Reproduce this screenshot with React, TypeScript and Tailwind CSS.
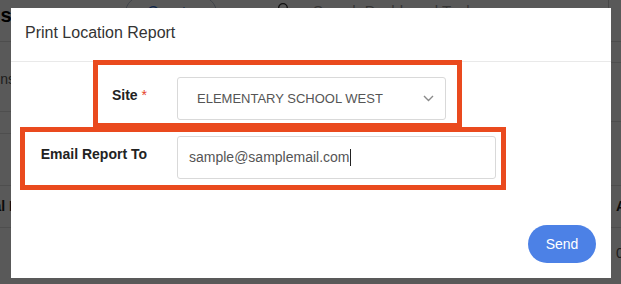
import React from "react";
import { Search } from "lucide-react";

function BackgroundPage() {
  return (
    <div className="flex flex-col">
      <div className="flex h-[42px] items-start border-b border-[#dcdcdc]">
        <div className="w-[125px] shrink-0 overflow-visible">
          <div className="-ml-[14px] mt-[3px] whitespace-nowrap text-[20px] font-bold leading-[24px] text-black">
            Assets Report
          </div>
        </div>
        <div className="-mt-[4px] flex h-[34px] w-[92px] shrink-0 items-center justify-center rounded-full border border-[#b9c3d6] text-[16px] text-[#2f6fd6]">
          Create
        </div>
        <div className="ml-[60px] mt-[2px] flex items-start">
          <Search size={13} strokeWidth={2.5} className="text-[#333]" />
          <span className="ml-[23px] -mt-[1px] whitespace-nowrap text-[15px] leading-[20px] text-[#999]">
            Search Dashboard Tools
          </span>
        </div>
        <div className="ml-auto h-[30px] w-[13px] shrink-0 border-l border-[#cfcfcf]" />
      </div>
      <div className="grid grid-cols-[300px_321px]">
        <div className="flex flex-col">
          <div className="h-[70px] overflow-visible border-b border-[#e0e0e0] pt-[27px]">
            <div className="-ml-[45px] whitespace-nowrap text-[14px] leading-[20px] text-[#555]">Locations</div>
          </div>
          <div className="h-[22px] border-b border-[#e0e0e0]" />
          <div className="h-[52px] border-b border-[#e0e0e0]" />
          <div className="flex h-[42px] items-center border-b border-[#e0e0e0]">
            <div className="-ml-[33px] whitespace-nowrap text-[14px] font-bold text-[#222]">Serial Number</div>
          </div>
          <div className="h-[56px]" />
        </div>
        <div className="flex flex-col">
          <div className="h-[21px] border-b border-[#e0e0e0]" />
          <div className="h-[59px] border-b border-[#e0e0e0]" />
          <div className="h-[64px] border-b border-[#e0e0e0]" />
          <div className="flex h-[42px] items-center border-b border-[#e0e0e0] pl-[316px]">
            <div className="whitespace-nowrap text-[14px] font-bold text-[#222]">Asset Tag</div>
          </div>
          <div className="flex h-[50px] items-center pl-[316px]">
            <div className="whitespace-nowrap text-[14px] text-[#555]">0</div>
          </div>
        </div>
      </div>
    </div>
  );
}

export default function App() {
  return (
    <div className="relative h-[284px] w-[621px] overflow-hidden bg-white font-['Liberation_Sans',Arial,sans-serif]">
      <BackgroundPage />
      <div className="absolute inset-0 bg-black/65" />
      <div className="absolute left-[11px] top-[8px] flex h-[270px] w-[600px] flex-col bg-white">
        <div className="h-[54px] border-b border-[#e9e9e9] px-[14px] pt-[15px] text-[16px] leading-[20px] text-[#333]">
          Print Location Report
        </div>
        <div className="flex flex-col gap-[16px] pt-[15px]">
          <div className="flex items-start">
            <div className="w-[136px] shrink-0 pt-[8px] text-right text-[14px] font-bold leading-[20px] text-[#222]">
              Site <span className="font-normal text-[#e5432a]">*</span>
            </div>
            <div className="ml-[30px] flex h-[43px] w-[269px] items-center justify-between rounded-[3px] border border-[#d9d9d9] pl-[19px] pr-[11px] text-[13px] text-[#555]">
              <span>ELEMENTARY SCHOOL WEST</span>
              <svg width="11" height="7" viewBox="0 0 11 7" fill="none">
                <path d="M1 1 L5.5 5.5 L10 1" stroke="#8a8a8a" strokeWidth="1.4" />
              </svg>
            </div>
          </div>
          <div className="flex items-start">
            <div className="w-[136px] shrink-0 pt-[8px] text-right text-[14px] font-bold leading-[20px] text-[#222]">
              Email Report To
            </div>
            <div className="ml-[30px] flex h-[43px] w-[319px] items-center rounded-[3px] border border-[#d9d9d9] pl-[11px] text-[14px] text-[#555]">
              <span>sample@samplemail.com</span>
              <span className="ml-[1px] h-[17px] w-[1px] bg-[#222]" />
            </div>
          </div>
        </div>
        <div className="mt-auto flex justify-end p-[15px]">
          <button className="flex h-[38px] w-[68px] items-center justify-center rounded-full bg-[#4c81e6] text-[14px] text-white">
            Send
          </button>
        </div>
        <div className="absolute left-[82px] top-[52px] h-[68px] w-[369px] border-[5px] border-[#ea4a1e]" />
        <div className="absolute left-[9px] top-[119px] h-[63px] w-[486px] border-[5px] border-[#ea4a1e]" />
      </div>
    </div>
  );
}
